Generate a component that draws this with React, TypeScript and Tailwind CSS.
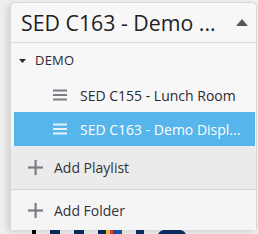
import React from 'react';

function Burger({ className }: { className: string }) {
  return (
    <svg width="14" height="12" viewBox="0 0 14 12" className={className}>
      <rect x="0" y="0.5" width="14" height="2" fill="currentColor" />
      <rect x="0" y="5" width="14" height="2" fill="currentColor" />
      <rect x="0" y="9.5" width="14" height="2" fill="currentColor" />
    </svg>
  );
}

function Plus() {
  return (
    <svg width="15" height="15" viewBox="0 0 15 15" className="text-[#7d7d88]">
      <rect x="6.5" y="0" width="2.2" height="15" fill="currentColor" />
      <rect x="0" y="6.4" width="15" height="2.2" fill="currentColor" />
    </svg>
  );
}

export default function App() {
  return (
    <div
      className="w-[258px] h-[234px] overflow-hidden bg-[#efefef] pl-[10px] pt-[2px]"
      style={{ fontFamily: '"Open Sans", sans-serif' }}
    >
      <div className="w-[247px] rounded-t-[5px] border border-b-0 border-[#d9d9d9] bg-[#f7f7f7] shadow-[-3px_2px_6px_rgba(0,0,0,0.12)]">
        <div className="flex h-[40px] items-center justify-between border-b border-[#dcdcdc] pl-[10px] pr-[8px]">
          <span className="text-[21.3px] leading-none text-[#1e1e26]">SED C163 - Demo ...</span>
          <svg width="12" height="7" viewBox="0 0 12 7" className="mt-[-1px]">
            <polygon points="6,0 12,7 0,7" fill="#575757" />
          </svg>
        </div>
        <div className="flex h-[35px] items-center pl-[8px]">
          <svg width="7" height="4" viewBox="0 0 7 4" className="mt-[1px]">
            <polygon points="0,0 7,0 3.5,4" fill="#2a2a33" />
          </svg>
          <span className="ml-[9px] text-[13px] tracking-[0.2px] text-[#2a2a33]">DEMO</span>
        </div>
        <div className="flex h-[34px] items-center pl-[42px]">
          <Burger className="text-[#7d7d88]" />
          <span className="ml-[13px] text-[14px] text-[#2a2a33]">SED C155 - Lunch Room</span>
        </div>
        <div className="ml-[3px] mr-[1px] flex h-[34px] items-center bg-[#56b5ea] pl-[39px]">
          <Burger className="text-[#e6f3fc]" />
          <span className="ml-[13px] text-[14px] text-white">SED C163 - Demo Displ...</span>
        </div>
        <div className="flex h-[44px] items-center border-b border-[#d6d6d6] bg-[#ebebeb] pl-[17px]">
          <Plus />
          <span className="ml-[11px] text-[14px] text-[#33333c]">Add Playlist</span>
        </div>
        <div className="flex h-[40px] items-center bg-[#f5f5f5] pl-[17px]">
          <Plus />
          <span className="ml-[11px] text-[14px] text-[#33333c]">Add Folder</span>
        </div>
      </div>
      <div className="flex h-[6px] items-start gap-[14px] pl-[22px]">
        <div className="h-full w-[4px] bg-black" />
        <div className="h-full w-[10px] bg-[#0d2a5c]" />
        <div className="h-full w-[10px] bg-[#0d2a5c]" />
        <div className="flex h-full w-[24px]">
          <div className="h-full w-[8px] bg-[#0d2a5c]" />
          <div className="h-full w-[4px] bg-[#f2b233]" />
          <div className="h-full w-[3px] bg-[#d6402f]" />
          <div className="h-full w-[9px] bg-[#1b4d9a]" />
        </div>
        <div className="h-full w-[8px] bg-[#0d2a5c]" />
        <div className="h-full w-[28px] rounded-t-full bg-[#0d2a5c]" />
      </div>
    </div>
  );
}
